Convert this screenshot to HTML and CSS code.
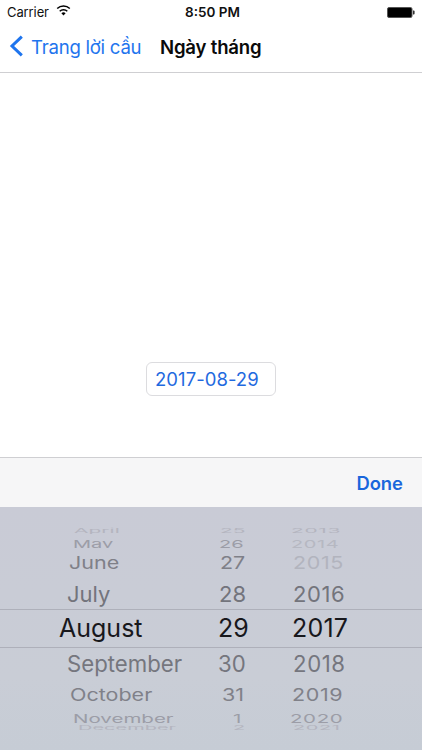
FILE: index.html
```html
<!DOCTYPE html>
<html lang="vi">
<head>
<meta charset="utf-8">
<title>Ngày tháng</title>
<link rel="stylesheet" href="styles.css">
</head>
<body>
<div class="screen">
  <header class="status">
    <div class="status-left">
      <span class="carrier">Carrier</span>
      <svg class="wifi" viewBox="0 0 15 11" width="15" height="11"><path d="M7.5 10.6 5.4 8.2a3 3 0 0 1 4.2 0z" fill="#000"/><path d="M3.7 6.2a5.4 5.4 0 0 1 7.6 0M1.2 3.5a9 9 0 0 1 12.6 0" fill="none" stroke="#000" stroke-width="1.5"/></svg>
    </div>
    <span class="time">8:50 PM</span>
    <svg class="battery" viewBox="0 0 28 11" width="28" height="11"><rect x=".5" y=".5" width="24.5" height="10" rx="1.5" fill="#000" stroke="#555"/><path d="M26 3.5h.6a1 1 0 0 1 1 1v2a1 1 0 0 1-1 1H26z" fill="#333"/></svg>
  </header>
  <nav class="navbar">
    <svg class="chevron" viewBox="0 0 15 22" width="15" height="22"><path d="M12.8 1.6 3 11l9.8 9.4" fill="none" stroke="#1f75ee" stroke-width="3"/></svg>
    <span class="back">Trang lời cầu</span>
    <span class="title">Ngày tháng</span>
  </nav>
  <main class="content">
    <div class="date-field">2017-08-29</div>
  </main>
  <div class="toolbar"><span class="done">Done</span></div>
  <section class="picker">
    <div class="row r-apr"><span class="mon">April</span><span class="day">25</span><span class="yr">2013</span></div>
    <div class="row r-may"><span class="mon">May</span><span class="day">26</span><span class="yr">2014</span></div>
    <div class="row r-jun"><span class="mon">June</span><span class="day">27</span><span class="yr dim">2015</span></div>
    <div class="row r-jul"><span class="mon">July</span><span class="day">28</span><span class="yr">2016</span></div>
    <div class="row r-aug"><span class="mon">August</span><span class="day">29</span><span class="yr">2017</span></div>
    <div class="row r-sep"><span class="mon">September</span><span class="day">30</span><span class="yr">2018</span></div>
    <div class="row r-oct"><span class="mon">October</span><span class="day">31</span><span class="yr">2019</span></div>
    <div class="row r-nov"><span class="mon">November</span><span class="day">1</span><span class="yr">2020</span></div>
    <div class="row r-dec"><span class="mon">December</span><span class="day">2</span><span class="yr">2021</span></div>
  </section>
</div>
</body>
</html>
```
FILE: styles.css
```css
* { box-sizing: border-box; }
html, body { margin: 0; padding: 0; }
body { font-family: Inter, "Liberation Sans", sans-serif; background: #fff; }
.screen { width: 422px; height: 750px; display: flex; flex-direction: column; overflow: hidden; }

.status { height: 20px; padding: 4px 7px 0 7px; display: flex; align-items: center; justify-content: space-between; position: relative; color: #111; }
.status-left { display: flex; align-items: center; gap: 7px; }
.carrier { font-size: 13px; letter-spacing: -0.1px; }
.wifi { margin-top: -3px; }
.time { font-size: 13.5px; font-weight: 600; position: absolute; left: 185px; top: 4px; }

.navbar { height: 53px; border-bottom: 1px solid #cfcfd2; display: flex; align-items: center; padding: 2px 0 0 9px; }
.chevron { margin-right: 7px; margin-top: -2px; }
.back { font-size: 18.6px; color: #1f75ee; letter-spacing: -0.25px; width: 129px; }
.title { font-size: 18.6px; font-weight: 600; color: #0a0a0a; letter-spacing: -0.2px; }

.content { flex: 1; display: flex; align-items: flex-start; padding: 289px 0 0 146px; }
.date-field { width: 130px; height: 34px; border: 1px solid #dcdcdf; border-radius: 6px; padding: 0 0 0 8px; font-size: 18.5px; line-height: 32px; color: #1f6ae0; letter-spacing: 0.05px; }

.toolbar { height: 50px; background: #f6f6f7; border-top: 1px solid #cfcfd2; display: flex; align-items: center; justify-content: flex-end; padding-right: 19px; }
.done { font-size: 18.4px; font-weight: 600; color: #1a66dc; }

.picker { height: 243px; background: linear-gradient(#c9cbd6, #c9cdd6 70%, #c6ccd5); padding-top: 20px; display: flex; flex-direction: column; flex-shrink: 0; }
.row { display: grid; grid-template-columns: 218px 72px 1fr; align-items: center; overflow: hidden; color: #7d7e86; white-space: nowrap; }
.row span { display: block; transform-origin: left center; line-height: 1; }
.row .yr { letter-spacing: 0.6px; }

.r-apr { height: 7px; color: #b4b5bf; }
.r-apr span { font-size: 21px; line-height: 2px; transform: scaleY(.3); }
.r-apr .mon { padding-left: 74px; } .r-apr .day { padding-left: 2px; } .r-apr .yr { padding-left: 1px; }

.r-may { height: 14px; color: #9c9da7; }
.r-may span { font-size: 20px; transform: scaleY(.55); }
.r-may .mon { padding-left: 73px; } .r-may .day { padding-left: 1px; } .r-may .yr { padding-left: 1px; }
.r-may .yr { color: #b6b8c2; }

.r-jun { height: 30px; color: #7f8088; }
.r-jun span { font-size: 21.5px; transform: scaleY(.8); }
.r-jun .mon { padding-left: 69px; } .r-jun .day { padding-left: 2px; } .r-jun .yr { padding-left: 3px; }
.r-jun .dim { color: #b2b4be; }

.r-jul { height: 31px; color: #73747c; }
.r-jul span { font-size: 22px; }
.r-jul .mon { padding-left: 67px; } .r-jul .day { padding-left: 1px; } .r-jul .yr { padding-left: 3px; }

.r-aug { height: 39px; color: #18181c; border-top: 1px solid #aeb0ba; border-bottom: 1px solid #aeb0ba; }
.r-aug span { font-size: 25px; }
.r-aug .mon { padding-left: 59px; } .r-aug .yr { padding-left: 2px; letter-spacing: 0.2px; }

.r-sep { height: 33px; color: #75767e; }
.r-sep span { font-size: 22.2px; }
.r-sep .mon { padding-left: 67px; } .r-sep .yr { padding-left: 3px; }

.r-oct { height: 28px; color: #808189; }
.r-oct span { font-size: 21.5px; transform: scaleY(.8); }
.r-oct .mon { padding-left: 70px; } .r-oct .day { padding-left: 4px; } .r-oct .yr { padding-left: 2px; }

.r-nov { height: 16px; color: #9c9da7; }
.r-nov span { font-size: 20.5px; transform: scaleY(.55); }
.r-nov .mon { padding-left: 73px; } .r-nov .day { padding-left: 15px; }

.r-dec { height: 5px; color: #b4b5bf; }
.r-dec span { font-size: 20px; line-height: 2px; transform: scaleY(.3); }
.r-dec .mon { padding-left: 78px; } .r-dec .day { padding-left: 15px; } .r-dec .yr { padding-left: 3px; }
```
